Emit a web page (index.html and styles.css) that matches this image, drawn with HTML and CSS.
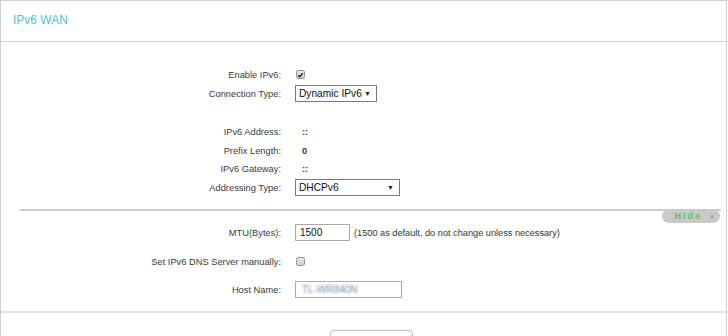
FILE: index.html
```html
<!DOCTYPE html>
<html>
<head>
<meta charset="utf-8">
<title>IPv6 WAN</title>
<link rel="stylesheet" href="styles.css">
</head>
<body>
<div class="panel">
  <div class="panel-head"><h2 class="title">IPv6 WAN</h2></div>
  <div class="panel-body">
    <div class="row">
      <span class="label">Enable IPv6:</span>
      <span class="check checked"><svg viewBox="0 0 8 8" width="8" height="8"><path d="M1.5 4.2 L3.2 5.9 L6.6 1.8" fill="none" stroke="#222" stroke-width="1.6"/></svg></span>
    </div>
    <div class="row">
      <span class="label">Connection Type:</span>
      <span class="select sel-conn"><span>Dynamic IPv6</span><span class="arrow">▼</span></span>
    </div>
    <div class="group">
      <div class="row row-sm">
        <span class="label">IPv6 Address:</span>
        <span class="value">::</span>
      </div>
      <div class="row row-sm">
        <span class="label">Prefix Length:</span>
        <span class="value">0</span>
      </div>
      <div class="row row-sm">
        <span class="label">IPv6 Gateway:</span>
        <span class="value">::</span>
      </div>
      <div class="row row-sm">
        <span class="label">Addressing Type:</span>
        <span class="select sel-addr"><span>DHCPv6</span><span class="arrow">▼</span></span>
      </div>
    </div>
    <div class="divider"><span class="toggle">Hide<span class="up">▲</span></span></div>
    <div class="row row-mtu">
      <span class="label">MTU(Bytes):</span>
      <span class="input in-mtu">1500</span>
      <span class="hint">(1500 as default, do not change unless necessary)</span>
    </div>
    <div class="row row-dns">
      <span class="label">Set IPv6 DNS Server manually:</span>
      <span class="check"></span>
    </div>
    <div class="row row-host">
      <span class="label">Host Name:</span>
      <span class="input in-host"><span class="blur">TL-WR840N</span></span>
    </div>
  </div>
  <div class="panel-foot">
    <button class="btn">Save</button>
  </div>
</div>
</body>
</html>
```
FILE: styles.css
```css
* { box-sizing: border-box; }
html, body { margin: 0; padding: 0; background: #fff; }
body { font-family: "Liberation Sans", Arial, sans-serif; color: #333; overflow: hidden; }

.panel {
  width: 727px;
  border: 1px solid #cfcfcf;
  border-bottom: none;
  height: 400px;
}
.panel-head {
  height: 41px;
  border-bottom: 1px solid #d2d2d2;
  display: flex;
  align-items: center;
  padding-left: 12px;
}
.title {
  margin: 0 0 2px 0;
  font-size: 12px;
  font-weight: normal;
  color: #4fc3d9;
}

.panel-body {
  padding: 23px 0 12px 0;
}
.row {
  display: flex;
  align-items: center;
  height: 19px;
}
.label {
  width: 280px;
  text-align: right;
  font-size: 9.3px;
  color: #3a3a3a;
  margin-right: 14px;
  white-space: nowrap;
}
.value {
  font-size: 9.3px;
  font-weight: bold;
  color: #333;
  padding-left: 7px;
}
.group { margin-top: 20px; }
.row-sm { height: 18.5px; }

.check {
  width: 9px;
  height: 9px;
  border: 1px solid #9a9a9a;
  border-radius: 2px;
  background: linear-gradient(#e6e6e6, #cfcfcf);
  display: inline-flex;
  align-items: center;
  justify-content: center;
  margin-left: 1px;
}
.check svg { display: block; }

.select {
  display: inline-flex;
  align-items: center;
  justify-content: space-between;
  height: 17px;
  border: 1px solid #7b7b7b;
  background: #fff;
  font-size: 10.2px;
  color: #111;
  padding: 0 5px 0 3px;
}
.sel-conn { width: 82px; }
.sel-addr { width: 105px; }
.arrow { font-size: 7px; color: #222; }

.divider {
  position: relative;
  height: 2px;
  background: #cccccc;
  margin: 12px 5px 0 19px;
}
.toggle {
  position: absolute;
  right: 1px;
  top: 0;
  width: 58px;
  height: 14px;
  background: #c9c9c9;
  border-radius: 7px;
  color: #6cc04a;
  font-size: 9px;
  font-weight: bold;
  letter-spacing: 2px;
  display: flex;
  align-items: center;
  justify-content: flex-end;
  padding-right: 5px;
}
.up { font-size: 6px; margin-left: 7px; letter-spacing: 0; }

.row-mtu { margin-top: 12px; }
.row-dns { margin-top: 10px; }
.row-host { margin-top: 9px; }

.input {
  display: inline-flex;
  align-items: center;
  height: 17px;
  border: 1px solid #a8a8a8;
  font-size: 10px;
  color: #111;
  padding-left: 4px;
}
.in-mtu { width: 55px; }
.in-host { width: 107px; }
.blur { color: #7f8ba0; filter: blur(1.3px); font-size: 10px; padding-left: 2px; }
.hint {
  font-size: 9.2px;
  color: #333;
  margin-left: 4px;
}

.panel-foot {
  border-top: 2px solid #e4e4e4;
  display: flex;
  justify-content: center;
  padding-top: 17px;
}
.btn {
  width: 83px;
  height: 34px;
  margin-left: 16px;
  padding: 16px 0 0 0;
  border: 1px solid #bdbdbd;
  border-radius: 4px;
  background: #fff;
  font-family: "Liberation Sans", Arial, sans-serif;
  font-size: 11px;
  color: #333;
  display: flex;
  align-items: flex-start;
  justify-content: center;
}
```
